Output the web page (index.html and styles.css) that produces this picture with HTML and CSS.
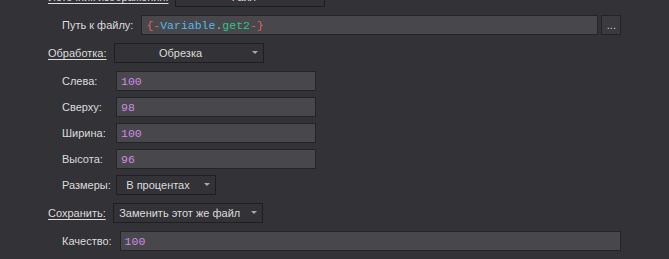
FILE: index.html
```html
<!DOCTYPE html>
<html lang="ru">
<head>
  <meta charset="UTF-8">
  <title>Обработка изображения</title>
  <link rel="stylesheet" href="styles.css">
</head>
<body>

  <div class="panel">

    <div class="row row-top">
      <span class="label link">Источник изображения:</span>
      <div class="combo w150"><span class="combo-text">Файл</span><span class="arrow"></span></div>
    </div>

    <div class="row sub">
      <span class="label">Путь к файлу:</span>
      <div class="field grow">
        <span class="code"><span class="c-br">{-</span><span class="c-var">Variable</span><span class="c-dot">.</span><span class="c-fn">get2</span><span class="c-br">-}</span></span>
      </div>
      <div class="btn-dots">...</div>
    </div>

    <div class="row">
      <span class="label link">Обработка:</span>
      <div class="combo w150"><span class="combo-text">Обрезка</span><span class="arrow"></span></div>
    </div>

    <!-- параметры обрезки -->
    <div class="crop-grid">
      <span class="label">Слева:</span>
      <div class="field w200"><span class="num">100</span></div>

      <span class="label">Сверху:</span>
      <div class="field w200"><span class="num">98</span></div>

      <span class="label">Ширина:</span>
      <div class="field w200"><span class="num">100</span></div>

      <span class="label">Высота:</span>
      <div class="field w200"><span class="num">96</span></div>

      <span class="label">Размеры:</span>
      <div class="combo w100"><span class="combo-text">В процентах</span><span class="arrow"></span></div>
    </div>

    <div class="row">
      <span class="label link">Сохранить:</span>
      <div class="combo w150"><span class="combo-text">Заменить этот же файл</span><span class="arrow"></span></div>
    </div>

    <div class="row sub">
      <span class="label">Качество:</span>
      <div class="field w501"><span class="num">100</span></div>
    </div>

  </div>

</body>
</html>
```

FILE: styles.css
```css
body, html {
  margin: 0;
  padding: 0;
  height: 100%;
  overflow: hidden;
}

body {
  background-color: #333237;
  color: #dcdcdc;
  font-family: "Liberation Sans", Arial, sans-serif;
  font-size: 11px;
}

.panel {
  padding-left: 48px;
  margin-top: -13px;
}

.row {
  display: flex;
  align-items: center;
  height: 20px;
  gap: 7px;
  margin-bottom: 8px;
}

.row.sub {
  padding-left: 14px;
  gap: 8px;
}

.label {
  white-space: nowrap;
}

.link {
  text-decoration: underline;
  text-underline-offset: 2px;
}

.field {
  box-sizing: border-box;
  height: 20px;
  background-color: #48474c;
  border: 1px solid #242327;
  display: flex;
  align-items: center;
  padding: 0 4px;
}

.field.grow {
  width: 457px;
}

.w200 { width: 200px; }
.w501 { width: 501px; }

.code, .num {
  font-family: "Liberation Mono", "DejaVu Sans Mono", monospace;
  font-size: 11.5px;
  padding-top: 1px;
}

.num { color: #d28be3; }
.c-br { color: #e45f5c; }
.c-var { color: #55b9e6; }
.c-dot { color: #9fbfb0; }
.c-fn { color: #2fc48c; }

.btn-dots {
  box-sizing: border-box;
  width: 20px;
  height: 20px;
  margin-left: -5px;
  border: 1px solid #242327;
  background-color: #3b3a3f;
  color: #cfcfcf;
  font-size: 11px;
  text-align: center;
  line-height: 18px;
}

.combo {
  box-sizing: border-box;
  height: 20px;
  border: 1px solid #1f1e22;
  background-color: #333237;
  display: flex;
  align-items: center;
}

.w150 { width: 150px; }
.w100 { width: 100px; }

.combo-text {
  flex: 1;
  text-align: center;
  white-space: nowrap;
}

.arrow {
  width: 16px;
  height: 20px;
  position: relative;
}

.arrow::after {
  content: "";
  position: absolute;
  left: 5px;
  top: 8px;
  border-left: 3px solid transparent;
  border-right: 3px solid transparent;
  border-top: 3px solid #a9a9ab;
}

.crop-grid {
  display: grid;
  grid-template-columns: 54px auto;
  grid-auto-rows: 20px;
  row-gap: 6px;
  align-items: center;
  justify-items: start;
  padding-left: 14px;
  margin-bottom: 8px;
}
```
